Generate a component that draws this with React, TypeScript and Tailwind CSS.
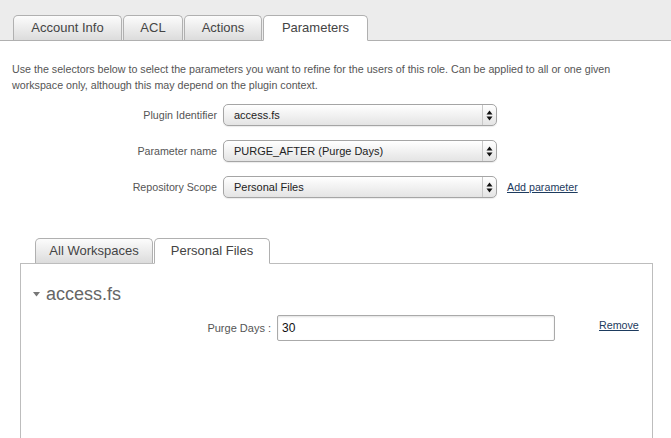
const topTabs = [
  { title: "Account Info", width: "w-[109px]" },
  { title: "ACL", width: "w-[60px]" },
  { title: "Actions", width: "w-[78px]" },
  { title: "Parameters", width: "w-[105px]", active: true },
];

const selects = [
  { label: "Plugin Identifier", value: "access.fs" },
  { label: "Parameter name", value: "PURGE_AFTER (Purge Days)" },
  { label: "Repository Scope", value: "Personal Files", link: "Add parameter" },
];

const Arrows = () => (
  <svg width="7" height="11" viewBox="0 0 7 11" className="block">
    <path d="M3.5 0.5 L6.5 4.5 L0.5 4.5 Z" fill="#111" />
    <path d="M3.5 10.5 L6.5 6.5 L0.5 6.5 Z" fill="#111" />
  </svg>
);

const Tab = ({ title, width, active }: { title: string; width: string; active?: boolean }) => (
  <div
    className={
      active
        ? `${width} h-[26px] -mb-px flex items-center justify-center rounded-t-[5px] border border-[#b0b0b0] border-b-white bg-white text-[13px] text-[#444]`
        : `${width} h-[25px] flex items-center justify-center rounded-t-[5px] border border-b-0 border-[#b0b0b0] bg-linear-to-b from-[#fcfcfc] to-[#dcdcdc] text-[13px] text-[#444]`
    }
  >
    {title}
  </div>
);

export default function App() {
  return (
    <div className="w-[671px] h-[438px] overflow-hidden bg-white font-['Liberation_Sans',Arial,sans-serif]">
      <div className="flex items-end gap-px h-[41px] pl-[13px] bg-[#ececec] border-b border-[#b0b0b0]">
        {topTabs.map((t) => (
          <Tab key={t.title} {...t} />
        ))}
      </div>

      <p className="mt-[20px] px-[12px] text-[10.7px] leading-[16px] text-[#555]">
        Use the selectors below to select the parameters you want to refine for the users of this role. Can be applied to all or one given
        <br />
        workspace only, although this may depend on the plugin context.
      </p>

      <div className="mt-[11px] flex flex-col gap-[14px]">
        {selects.map((s) => (
          <div key={s.label} className="flex items-center h-[22px]">
            <div className="w-[217px] text-right text-[10.7px] text-[#555]">{s.label}</div>
            <div className="ml-[6px] w-[274px] h-[22px] flex items-center rounded-[5px] border border-[#a5a5a5] bg-linear-to-b from-white to-[#e4e4e4] shadow-[0_1px_1px_rgba(0,0,0,0.08)]">
              <span className="flex-1 pl-[10px] text-[11px] text-[#222]">{s.value}</span>
              <div className="h-full w-[14px] flex items-center justify-center border-l border-[#c8c8c8]">
                <Arrows />
              </div>
            </div>
            {s.link && (
              <a href="#" className="ml-[10px] text-[10.7px] text-[#1d3b5e] underline">
                {s.link}
              </a>
            )}
          </div>
        ))}
      </div>

      <div className="mt-[40px] ml-[20px] w-[633px]">
        <div className="flex items-end pl-[15px] gap-px">
          <Tab title="All Workspaces" width="w-[118px]" />
          <Tab title="Personal Files" width="w-[116px]" active />
        </div>
        <div className="h-[200px] border border-[#bdbdbd]">
          <div className="mt-[19px] ml-[12px] flex items-center gap-[6px] text-[18px] leading-[22px] text-[#666]">
            <svg width="7" height="5" viewBox="0 0 7 5">
              <path d="M0 0 L7 0 L3.5 4.5 Z" fill="#777" />
            </svg>
            <span>access.fs</span>
          </div>
          <div className="mt-[10px] flex items-start">
            <div className="w-[250px] h-[26px] flex items-center justify-end text-[11px] text-[#555]">Purge Days :</div>
            <input
              defaultValue="30"
              className="ml-[6px] w-[278px] h-[26px] rounded-[2px] border border-[#aaa] bg-white px-[4px] text-[12px] text-[#111] shadow-[inset_0_1px_2px_rgba(0,0,0,0.12)] outline-none"
            />
            <a href="#" className="ml-[44px] mt-[2px] text-[10.7px] text-[#1d3b5e] underline">
              Remove
            </a>
          </div>
        </div>
      </div>
    </div>
  );
}
